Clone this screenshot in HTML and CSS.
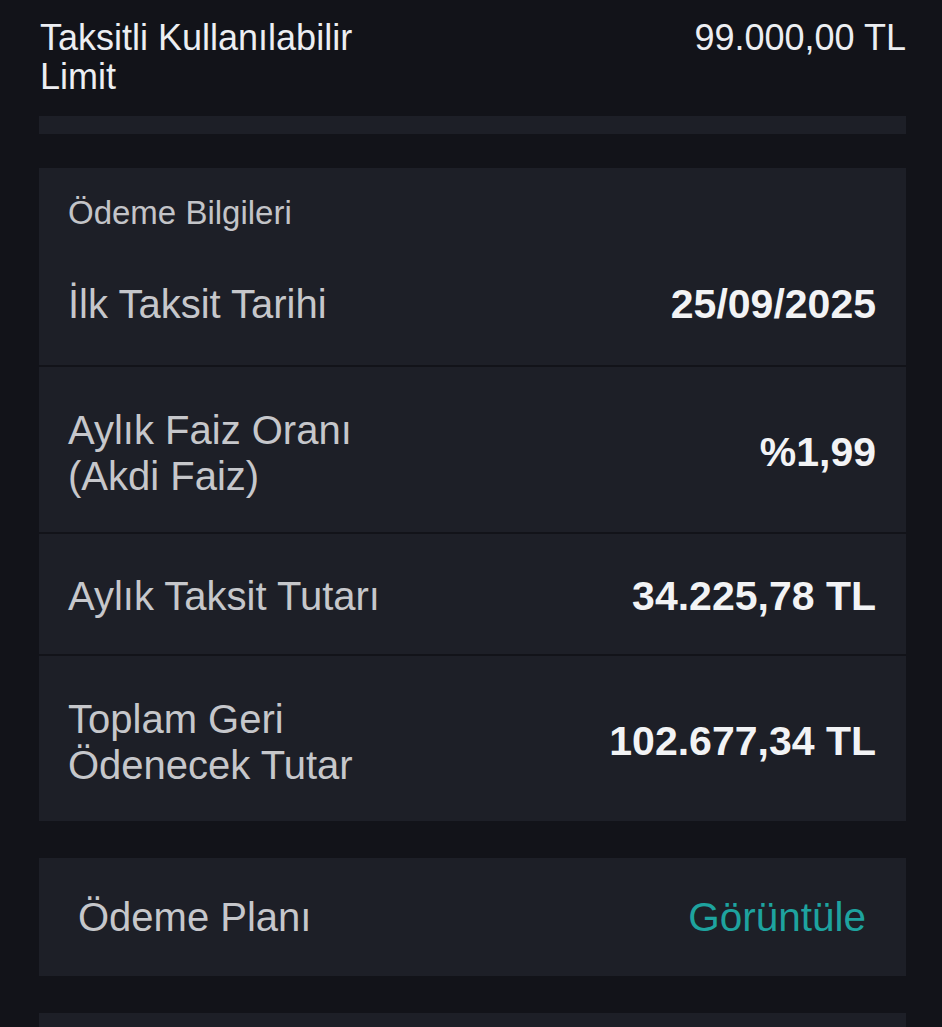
FILE: index.html
```html
<!DOCTYPE html>
<html lang="tr">
<head>
<meta charset="utf-8">
<link rel="stylesheet" href="styles.css">
</head>
<body>
<div class="page">
  <div class="limit">
    <div class="limit-label">Taksitli Kullanılabilir<br>Limit</div>
    <div class="limit-value">99.000,00 TL</div>
  </div>
  <div class="bar"></div>

  <section class="card">
    <div class="card-head">Ödeme Bilgileri</div>
    <div class="rows">
      <div class="row single">
        <div class="label">İlk Taksit Tarihi</div>
        <div class="value">25/09/2025</div>
      </div>
      <div class="row double">
        <div class="label">Aylık Faiz Oranı<br>(Akdi Faiz)</div>
        <div class="value">%1,99</div>
      </div>
      <div class="row single">
        <div class="label">Aylık Taksit Tutarı</div>
        <div class="value">34.225,78 TL</div>
      </div>
      <div class="row double">
        <div class="label">Toplam Geri<br>Ödenecek Tutar</div>
        <div class="value">102.677,34 TL</div>
      </div>
    </div>
  </section>

  <section class="plan">
    <div class="label">Ödeme Planı</div>
    <div class="link">Görüntüle</div>
  </section>

  <section class="next"></section>
</div>
</body>
</html>
```

FILE: styles.css
```css
*, *::before, *::after {
  box-sizing: border-box;
}

html, body {
  margin: 0;
  padding: 0;
  background: #121319;
  height: 100%;
  overflow: hidden;
}

body {
  font-family: "Liberation Sans", Arial, sans-serif;
  color: #e6e7ea;
}

.page {
  padding: 18px 36px 0 39px;
  display: flex;
  flex-direction: column;
}

.limit {
  display: flex;
  justify-content: space-between;
  align-items: flex-start;
  padding-left: 1px;
}

.limit-label,
.limit-value {
  font-size: 36px;
  line-height: 39px;
  color: #eceef2;
}

.bar {
  margin-top: 20px;
  height: 18px;
  background: #1d1f27;
}

.card {
  margin-top: 34px;
  display: flex;
  flex-direction: column;
}

.card-head {
  background: #1d1f27;
  padding: 27px 29px 14px;
  font-size: 33px;
  line-height: 36px;
  color: #c3c4c8;
}

.rows {
  display: flex;
  flex-direction: column;
  gap: 2px;
}

.row {
  background: #1d1f27;
  display: flex;
  justify-content: space-between;
  align-items: center;
  padding: 0 30px 0 29px;
}

.row.single {
  height: 120px;
  padding-top: 4px;
}

.row.double {
  height: 165px;
  padding-top: 6px;
}

.label {
  font-size: 40px;
  line-height: 46px;
  color: #c6c7cb;
}

.value {
  font-size: 41px;
  font-weight: 700;
  color: #f2f3f5;
}

.rows .row:first-child {
  height: 120px;
  padding-top: 0;
  padding-bottom: 2px;
}

.plan {
  margin-top: 37px;
  height: 118px;
  background: #1d1f27;
  display: flex;
  justify-content: space-between;
  align-items: center;
  padding: 0 40px 0 39px;
}

.link {
  font-size: 40.5px;
  color: #1ea39f;
}

.next {
  margin-top: 37px;
  height: 40px;
  background: #1d1f27;
}
```
